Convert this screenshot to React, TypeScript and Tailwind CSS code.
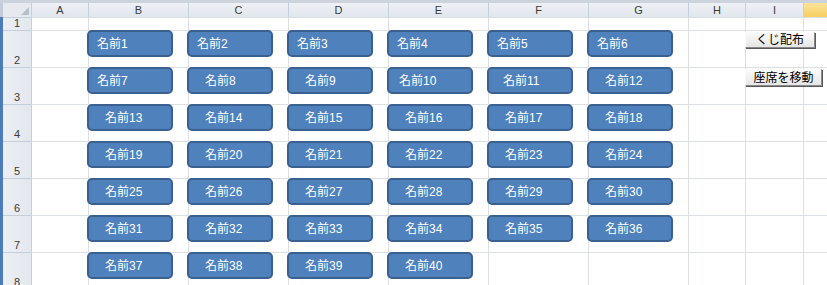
import React from "react";

const COLS = ["A", "B", "C", "D", "E", "F", "G", "H", "I", ""];
const ROW_H = [13, 37, 37, 37, 37, 37, 37, 37];

function padFor(n: number): number {
  if (n <= 7) return 10;
  if (n === 10) return 12;
  if (n === 11) return 16;
  return 18;
}

function Shape({ n }: { n: number }) {
  return (
    <div
      className="-ml-[2px] -mt-px flex h-[27px] w-[86px] shrink-0 items-center rounded-[5px] border-2 border-[#3a6090] bg-[#4f81bd] text-[12px] leading-none text-white"
      style={{ paddingLeft: padFor(n) - 2 }}
    >
      名前{n}
    </div>
  );
}

function Btn({ label, w }: { label: string; w: string }) {
  return (
    <div
      className={`${w} relative z-10 -ml-px mt-[1px] flex h-[16px] shrink-0 items-center justify-center border border-t-[#fafafa] border-l-[#fafafa] border-r-[#8a8a8a] border-b-[#8a8a8a] bg-gradient-to-b from-[#fbfbfb] to-[#e6e6e6] text-[12px] leading-none text-black shadow-[1px_1px_0_#5a5a5a]`}
    >
      {label}
    </div>
  );
}

export default function App() {
  const gridCols = "grid-cols-[28px_57px_100px_100px_100px_100px_100px_100px_57px_58px_1fr]";
  return (
    <div
      className="flex h-[285px] w-[827px] flex-col overflow-hidden bg-white"
      style={{ fontFamily: '"Liberation Sans", "Noto Sans CJK JP", sans-serif' }}
    >
      <div className="h-[3px] shrink-0 bg-[#cdd3dc]" />
      <div className="flex min-h-0 flex-1">
        <div className="flex w-[3px] shrink-0 flex-col">
          <div className="h-[14px] bg-[#c4ccd8]" />
          <div className="flex-1 bg-[#4d7cbb]" />
        </div>
        <div className={`grid flex-1 ${gridCols} grid-rows-[14px_13px_37px_37px_37px_37px_37px_37px_37px] content-start`}>
          {/* header row */}
          <div className="relative flex items-end justify-end bg-[#e6eaf0] pb-[2px] pr-[2px]">
            <svg width="8" height="8" viewBox="0 0 8 8">
              <polygon points="8,0 8,8 0,8" fill="#b7bfca" />
            </svg>
          </div>
          {COLS.map((c, i) => (
            <div
              key={"h" + i}
              className={`flex items-center justify-center border-l border-[#c5cedb] text-[11px] leading-none text-[#3b3b3b] ${
                i === 9 ? "bg-gradient-to-b from-[#fbe39a] to-[#f6cf5e]" : "bg-gradient-to-b from-[#eef1f6] to-[#e1e6ed]"
              }`}
            >
              {c}
            </div>
          ))}
          {/* data rows */}
          {ROW_H.map((_, r) => {
            const rowNum = r + 1;
            return (
              <React.Fragment key={"r" + r}>
                <div className="flex items-end justify-center border-t border-[#c5cedb] bg-gradient-to-r from-[#eceff4] to-[#e3e8ee] text-[11px] leading-[13px] text-[#3b3b3b]">
                  {rowNum}
                </div>
                {COLS.map((_, ci) => {
                  let content: React.ReactNode = null;
                  if (rowNum >= 2 && ci >= 1 && ci <= 6) {
                    const n = (rowNum - 2) * 6 + ci;
                    if (n <= 40) content = <Shape n={n} />;
                  }
                  if (ci === 8 && rowNum === 2) content = <Btn label="くじ配布" w="w-[70px]" />;
                  if (ci === 8 && rowNum === 3) content = <Btn label="座席を移動" w="w-[77px] h-[17px]" />;
                  return (
                    <div
                      key={"c" + r + "-" + ci}
                      className={`flex items-start border-t border-[#dcdfe3] ${ci === 0 ? "border-l border-l-[#c5cedb]" : "border-l"}`}
                    >
                      {content}
                    </div>
                  );
                })}
              </React.Fragment>
            );
          })}
        </div>
      </div>
    </div>
  );
}
